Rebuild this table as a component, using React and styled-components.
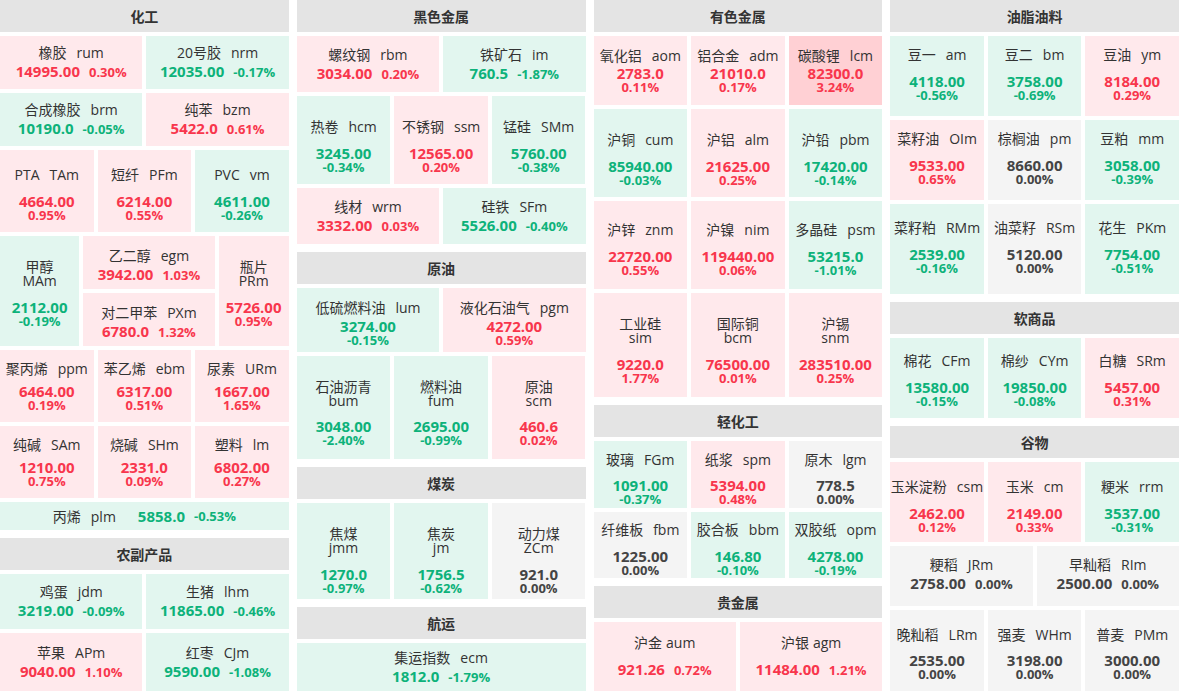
import React from "react";
import styled, { createGlobalStyle } from "styled-components";

const GlobalStyle = createGlobalStyle`
  html, body { margin: 0; padding: 0; background: #fff; overflow: hidden; }
  body { font-family: "Open Sans", "Noto Sans CJK SC", sans-serif; }
`;

const BG = { up: "#ffe9ec", down: "#e2f6ef", flat: "#f4f4f4", hot: "#ffd0d4" };
const FG = { up: "#f8364c", down: "#0db27a", flat: "#444444", hot: "#f8364c" };

const Board = styled.div`
  display: flex;
  gap: 8px;
  width: 1179px;
  height: 691px;
`;

const Column = styled.div`
  flex: 1 1 0;
  min-width: 0;
  display: flex;
  flex-direction: column;
  gap: 8px;
`;

const Section = styled.section`
  display: flex;
  flex-direction: column;
  gap: 4px;
`;

const Header = styled.div`
  height: 32px;
  flex: none;
  background: #e4e4e4;
  display: flex;
  align-items: center;
  justify-content: center;
  font-size: 14px;
  font-weight: 700;
  color: #333;
`;

const Row = styled.div`
  display: flex;
  gap: 4px;
  height: ${(p) => p.$h}px;
  flex: none;
`;

const SubStack = styled.div`
  flex: ${(p) => p.$w} 1 0;
  min-width: 0;
  display: flex;
  flex-direction: column;
  gap: 4px;
`;

const Cell = styled.div`
  flex: ${(p) => p.$w ?? 1} 1 0;
  min-width: 0;
  box-sizing: border-box;
  padding-top: ${(p) => (p.$dy > 0 ? p.$dy * 2 : 0)}px;
  padding-bottom: ${(p) => (p.$dy < 0 ? -p.$dy * 2 : 0)}px;
  background: ${(p) => BG[p.$tone]};
  display: flex;
  flex-direction: ${(p) => (p.$row ? "row" : "column")};
  align-items: center;
  justify-content: center;
  text-align: center;
  white-space: nowrap;
`;

const Name = styled.div`
  font-size: 14px;
  line-height: ${(p) => (p.$wrap ? 14 : 18)}px;
  color: #333;
`;

const Code = styled.span`
  margin-left: ${(p) => (p.$tight ? 4 : 10)}px;
`;

const Price = styled.div`
  font-size: 15px;
  font-weight: 700;
  line-height: 15px;
  color: ${(p) => FG[p.$tone]};
  margin-top: ${(p) => p.$mt ?? 0}px;
`;

const Pct = styled.div`
  font-size: 13px;
  font-weight: 700;
  line-height: 13px;
  color: ${(p) => FG[p.$tone]};
`;

const PriceLine = styled.div`
  display: flex;
  align-items: baseline;
  justify-content: center;
  gap: 9px;
  line-height: 18px;
  margin-top: ${(p) => p.$mt ?? 0}px;
`;

const InlinePrice = styled.span`
  font-size: 15px;
  font-weight: 700;
  color: ${(p) => FG[p.$tone]};
`;

const InlinePct = styled.span`
  font-size: 13px;
  font-weight: 700;
  color: ${(p) => FG[p.$tone]};
  margin-left: ${(p) => p.$ml ?? 0}px;
`;

const RowName = styled.span`
  font-size: 14px;
  color: #333;
  margin-right: 22px;
`;

const toneOf = (pct) => (pct.startsWith("-") ? "down" : pct === "0.00%" ? "flat" : "up");

function Quote({ q, dy = 0 }) {
  const tone = q.tone || toneOf(q.pct);
  const mode = q.mode || "stack";
  const d = q.d ?? 26;
  if (mode === "row") {
    return (
      <Cell $w={q.w} $tone={tone} $dy={dy} $row>
        <RowName>
          {q.name}
          <Code>{q.code}</Code>
        </RowName>
        <InlinePrice $tone={tone}>{q.price}</InlinePrice>
        <InlinePct $tone={tone} $ml={9}>{q.pct}</InlinePct>
      </Cell>
    );
  }
  if (mode === "inline") {
    return (
      <Cell $w={q.w} $tone={tone} $dy={dy}>
        <Name>
          {q.name}
          <Code $tight={q.tight}>{q.code}</Code>
        </Name>
        <PriceLine $mt={(q.d ?? 18) - 18}>
          <InlinePrice $tone={tone}>{q.price}</InlinePrice>
          <InlinePct $tone={tone}>{q.pct}</InlinePct>
        </PriceLine>
      </Cell>
    );
  }
  const wrap = mode === "wrap";
  return (
    <Cell $w={q.w} $tone={tone} $dy={dy}>
      {wrap ? (
        <>
          <Name $wrap>{q.name}</Name>
          <Name $wrap>{q.code}</Name>
        </>
      ) : (
        <Name>
          {q.name}
          <Code>{q.code}</Code>
        </Name>
      )}
      <Price $tone={tone} $mt={d - (wrap ? 14.5 : 16.5)}>
        {q.price}
      </Price>
      <Pct $tone={tone}>{q.pct}</Pct>
    </Cell>
  );
}

const Q = (name, code, price, pct, extra = {}) => ({ name, code, price, pct, ...extra });
const I = { mode: "inline" };
const W = { mode: "wrap" };

const columns = [
  [
    {
      title: "化工",
      rows: [
        { h: 53, cells: [Q("橡胶", "rum", "14995.00", "0.30%", I), Q("20号胶", "nrm", "12035.00", "-0.17%", I)] },
        { h: 53, cells: [Q("合成橡胶", "brm", "10190.0", "-0.05%", I), Q("纯苯", "bzm", "5422.0", "0.61%", I)] },
        { h: 82, dy: 3, cells: [Q("PTA", "TAm", "4664.00", "0.95%"), Q("短纤", "PFm", "6214.00", "0.55%"), Q("PVC", "vm", "4611.00", "-0.26%")] },
        {
          h: 110,
          dy: 3,
          cells: [
            Q("甲醇", "MAm", "2112.00", "-0.19%", { ...W, w: 79 }),
            { stack: true, w: 131, cells: [Q("乙二醇", "egm", "3942.00", "1.03%", I), Q("对二甲苯", "PXm", "6780.0", "1.32%", I)] },
            Q("瓶片", "PRm", "5726.00", "0.95%", { ...W, w: 70 }),
          ],
        },
        { h: 72, cells: [Q("聚丙烯", "ppm", "6464.00", "0.19%", { d: 22 }), Q("苯乙烯", "ebm", "6317.00", "0.51%", { d: 22 }), Q("尿素", "URm", "1667.00", "1.65%", { d: 22 })] },
        { h: 72, cells: [Q("纯碱", "SAm", "1210.00", "0.75%", { d: 22 }), Q("烧碱", "SHm", "2331.0", "0.09%", { d: 22 }), Q("塑料", "lm", "6802.00", "0.27%", { d: 22 })] },
        { h: 28, cells: [Q("丙烯", "plm", "5858.0", "-0.53%", { mode: "row" })] },
      ],
    },
    {
      title: "农副产品",
      rows: [
        { h: 55, cells: [Q("鸡蛋", "jdm", "3219.00", "-0.09%", I), Q("生猪", "lhm", "11865.00", "-0.46%", I)] },
        { h: 58, cells: [Q("苹果", "APm", "9040.00", "1.10%", I), Q("红枣", "CJm", "9590.00", "-1.08%", I)] },
      ],
    },
  ],
  [
    {
      title: "黑色金属",
      rows: [
        { h: 56, cells: [Q("螺纹钢", "rbm", "3034.00", "0.20%", I), Q("铁矿石", "im", "760.5", "-1.87%", I)] },
        { h: 88, dy: 6, cells: [Q("热卷", "hcm", "3245.00", "-0.34%"), Q("不锈钢", "ssm", "12565.00", "0.20%"), Q("锰硅", "SMm", "5760.00", "-0.38%")] },
        { h: 56, cells: [Q("线材", "wrm", "3332.00", "0.03%", I), Q("硅铁", "SFm", "5526.00", "-0.40%", I)] },
      ],
    },
    {
      title: "原油",
      rows: [
        { h: 64, dy: 3, cells: [Q("低硫燃料油", "lum", "3274.00", "-0.15%", { d: 18 }), Q("液化石油气", "pgm", "4272.00", "0.59%", { d: 18 })] },
        { h: 103, dy: 6, cells: [Q("石油沥青", "bum", "3048.00", "-2.40%", W), Q("燃料油", "fum", "2695.00", "-0.99%", W), Q("原油", "scm", "460.6", "0.02%", W)] },
      ],
    },
    {
      title: "煤炭",
      rows: [{ h: 96, dy: 10, cells: [Q("焦煤", "jmm", "1270.0", "-0.97%", W), Q("焦炭", "jm", "1756.5", "-0.62%", W), Q("动力煤", "ZCm", "921.0", "0.00%", W)] }],
    },
    {
      title: "航运",
      rows: [{ h: 48, cells: [Q("集运指数", "ecm", "1812.0", "-1.79%", I)] }],
    },
  ],
  [
    {
      title: "有色金属",
      rows: [
        { h: 69, cells: [Q("氧化铝", "aom", "2783.0", "0.11%", { d: 18 }), Q("铝合金", "adm", "21010.0", "0.17%", { d: 18 }), Q("碳酸锂", "lcm", "82300.0", "3.24%", { d: 18, tone: "hot" })] },
        { h: 88, dy: 6, cells: [Q("沪铜", "cum", "85940.00", "-0.03%"), Q("沪铝", "alm", "21625.00", "0.25%"), Q("沪铅", "pbm", "17420.00", "-0.14%")] },
        { h: 88, dy: 4, cells: [Q("沪锌", "znm", "22720.00", "0.55%"), Q("沪镍", "nim", "119440.00", "0.06%"), Q("多晶硅", "psm", "53215.0", "-1.01%")] },
        { h: 104, dy: 6, cells: [Q("工业硅", "sim", "9220.0", "1.77%", W), Q("国际铜", "bcm", "76500.00", "0.01%", W), Q("沪锡", "snm", "283510.00", "0.25%", W)] },
      ],
    },
    {
      title: "轻化工",
      rows: [
        { h: 67, dy: 4, cells: [Q("玻璃", "FGm", "1091.00", "-0.37%"), Q("纸浆", "spm", "5394.00", "0.48%"), Q("原木", "lgm", "778.5", "0.00%")] },
        { h: 66, dy: 4, cells: [Q("纤维板", "fbm", "1225.00", "0.00%"), Q("胶合板", "bbm", "146.80", "-0.10%"), Q("双胶纸", "opm", "4278.00", "-0.19%")] },
      ],
    },
    {
      title: "贵金属",
      rows: [
        { h: 69, cells: [Q("沪金", "aum", "921.26", "0.72%", { ...I, d: 26, tight: true }), Q("沪银", "agm", "11484.00", "1.21%", { ...I, d: 26, tight: true })] },
      ],
    },
  ],
  [
    {
      title: "油脂油料",
      rows: [
        { h: 80, dy: -2, cells: [Q("豆一", "am", "4118.00", "-0.56%"), Q("豆二", "bm", "3758.00", "-0.69%"), Q("豆油", "ym", "8184.00", "0.29%")] },
        { h: 80, dy: -2, cells: [Q("菜籽油", "OIm", "9533.00", "0.65%"), Q("棕榈油", "pm", "8660.00", "0.00%"), Q("豆粕", "mm", "3058.00", "-0.39%")] },
        { h: 90, dy: -2, cells: [Q("菜籽粕", "RMm", "2539.00", "-0.16%"), Q("油菜籽", "RSm", "5120.00", "0.00%"), Q("花生", "PKm", "7754.00", "-0.51%")] },
      ],
    },
    {
      title: "软商品",
      rows: [{ h: 80, dy: 2, cells: [Q("棉花", "CFm", "13580.00", "-0.15%"), Q("棉纱", "CYm", "19850.00", "-0.08%"), Q("白糖", "SRm", "5457.00", "0.31%")] }],
    },
    {
      title: "谷物",
      rows: [
        { h: 80, dy: 4, cells: [Q("玉米淀粉", "csm", "2462.00", "0.12%"), Q("玉米", "cm", "2149.00", "0.33%"), Q("粳米", "rrm", "3537.00", "-0.31%")] },
        { h: 60, dy: -2, cells: [Q("粳稻", "JRm", "2758.00", "0.00%", I), Q("早籼稻", "RIm", "2500.00", "0.00%", I)] },
        { h: 81, dy: 3, cells: [Q("晚籼稻", "LRm", "2535.00", "0.00%"), Q("强麦", "WHm", "3198.00", "0.00%"), Q("普麦", "PMm", "3000.00", "0.00%")] },
      ],
    },
  ],
];

export default function App() {
  return (
    <>
      <GlobalStyle />
      <Board>
        {columns.map((sections, ci) => (
          <Column key={ci}>
            {sections.map((s) => (
              <Section key={s.title}>
                <Header>{s.title}</Header>
                {s.rows.map((r, ri) => (
                  <Row key={ri} $h={r.h}>
                    {r.cells.map((c, k) =>
                      c.stack ? (
                        <SubStack key={k} $w={c.w}>
                          {c.cells.map((cc, j) => (
                            <Quote key={j} q={cc} dy={r.dy} />
                          ))}
                        </SubStack>
                      ) : (
                        <Quote key={k} q={c} dy={r.dy} />
                      )
                    )}
                  </Row>
                ))}
              </Section>
            ))}
          </Column>
        ))}
      </Board>
    </>
  );
}
